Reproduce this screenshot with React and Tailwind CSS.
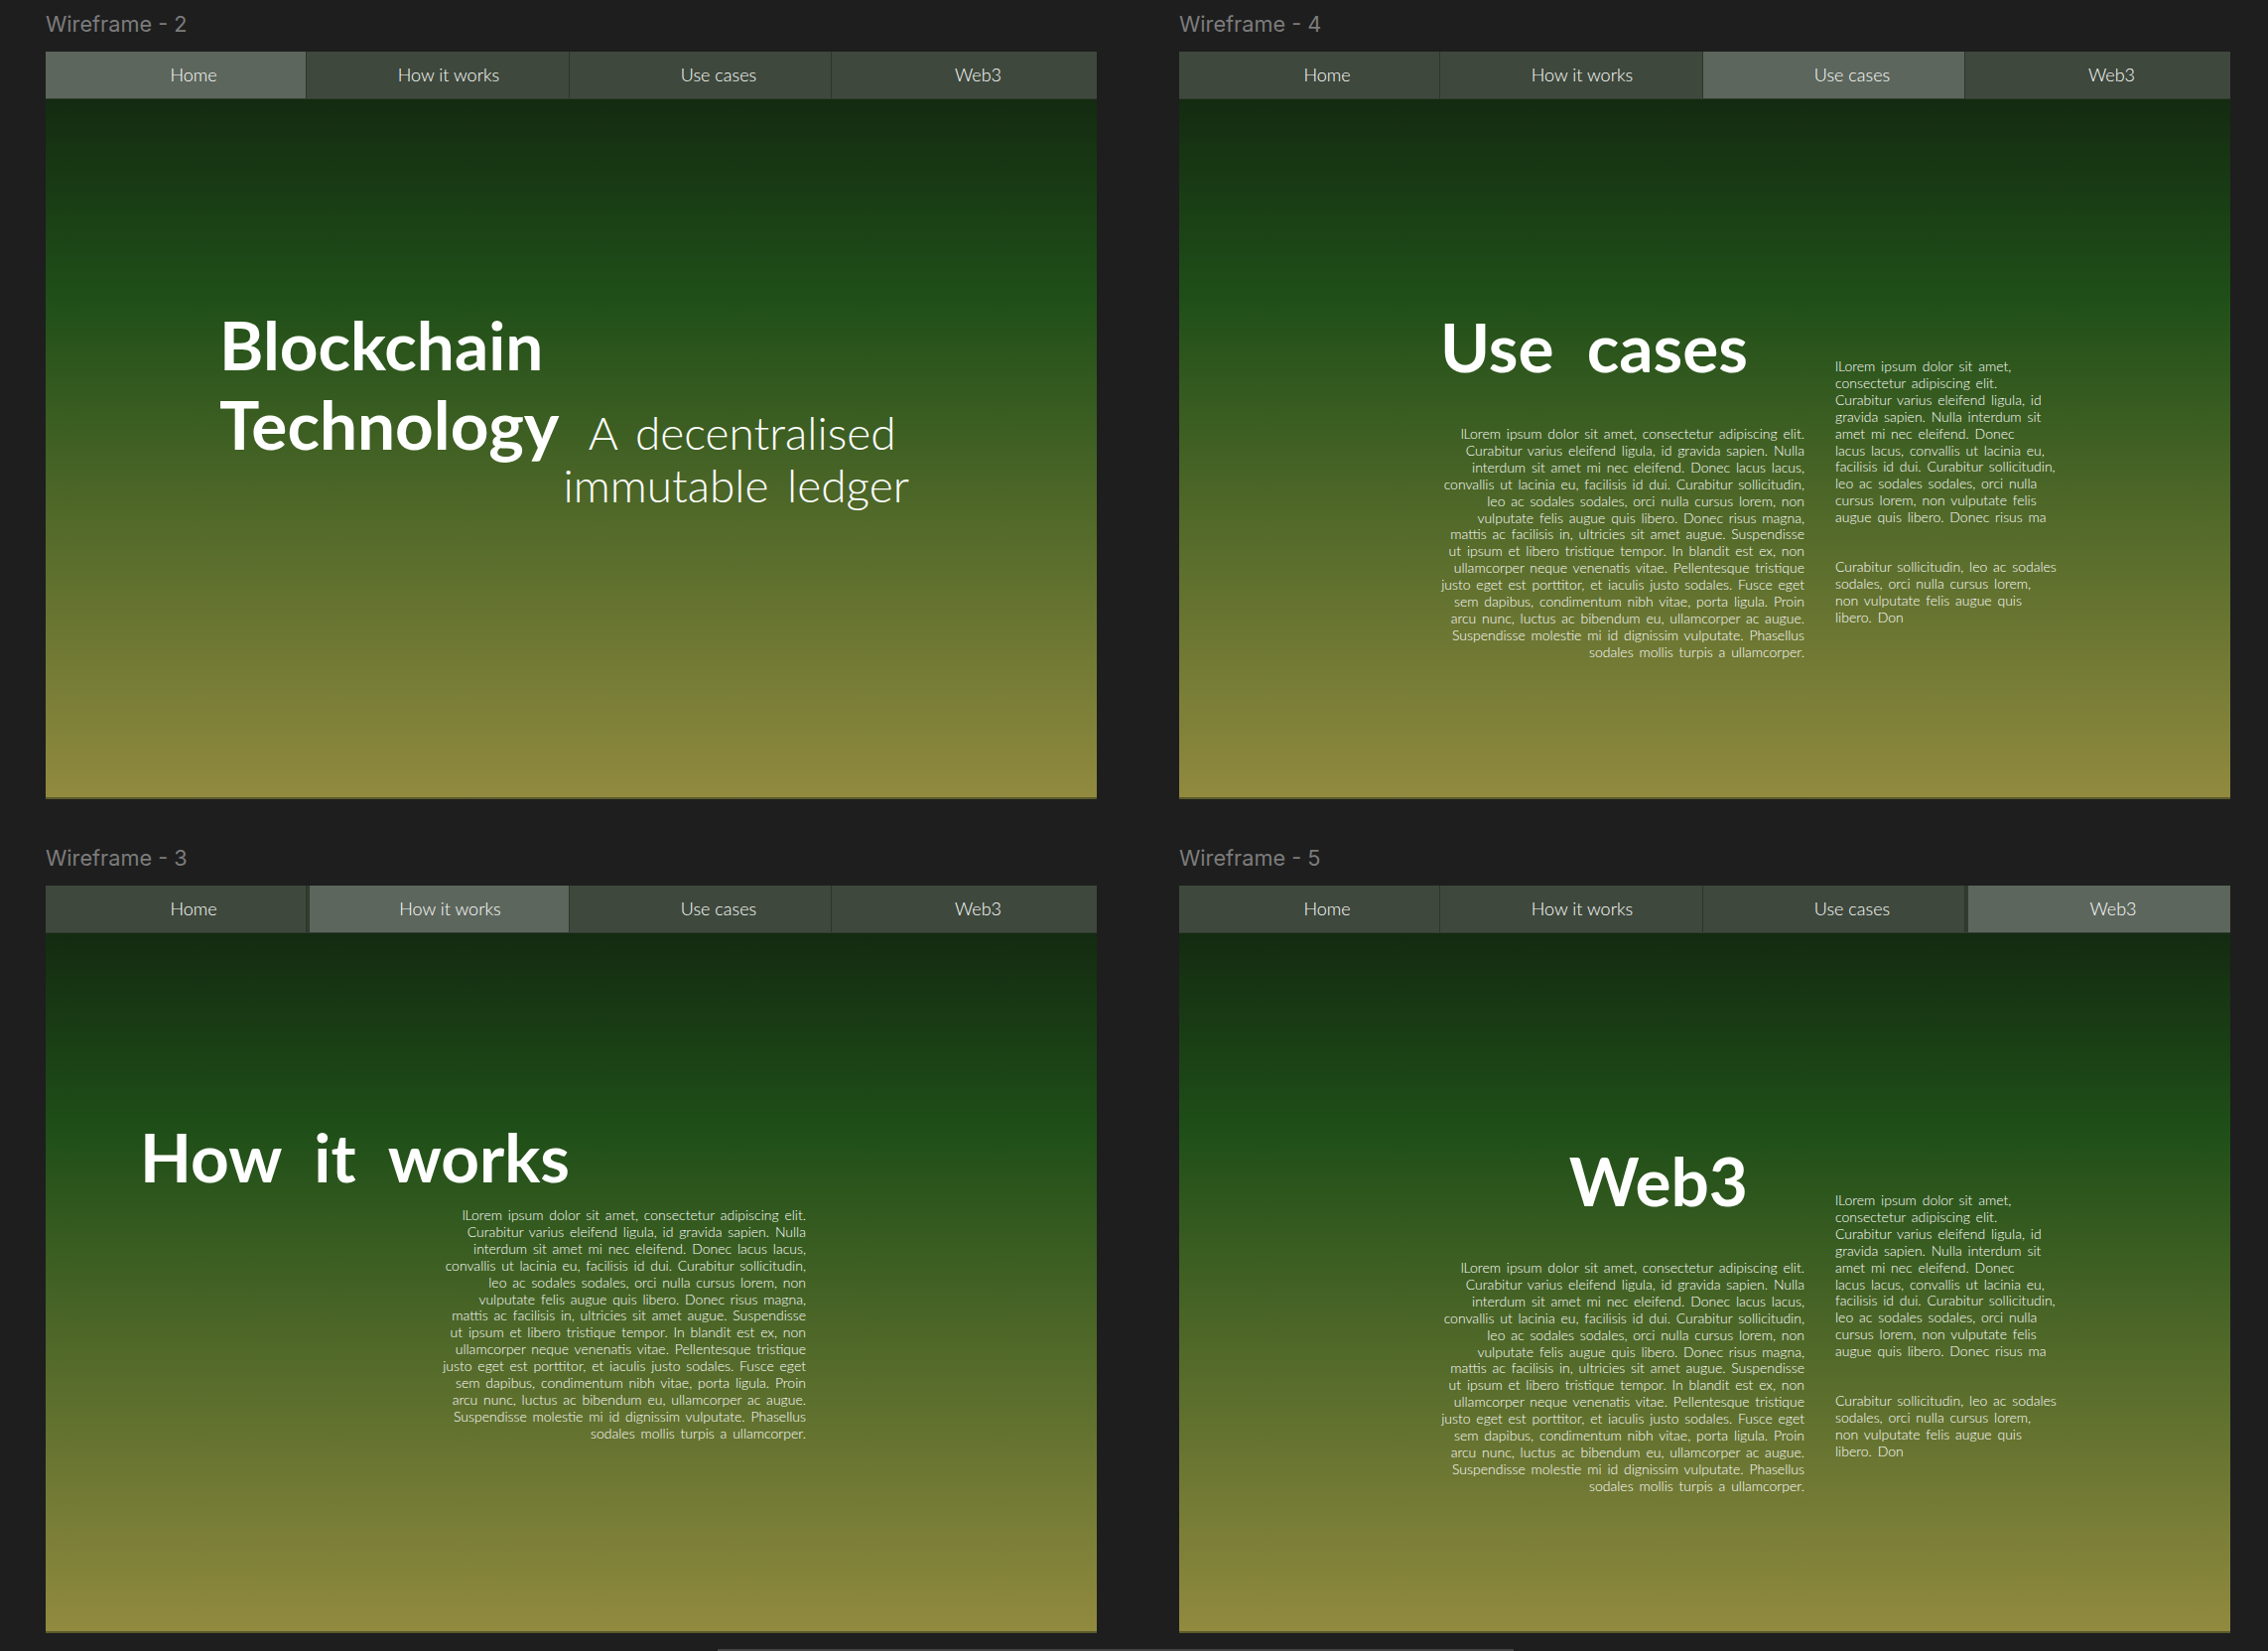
const tabs = [
  { name: "Home", cls: "w-[263px] pl-[36px]" },
  { name: "How it works", cls: "w-[265px] pl-[22px]" },
  { name: "Use cases", cls: "w-[264px] pl-[37px]" },
  { name: "Web3", cls: "flex-1 pl-[28px]" },
]

const mainLines = [
  "lLorem ipsum dolor sit amet, consectetur adipiscing elit.",
  "Curabitur varius eleifend ligula, id gravida sapien. Nulla",
  "interdum sit amet mi nec eleifend. Donec lacus lacus,",
  "convallis ut lacinia eu, facilisis id dui. Curabitur sollicitudin,",
  "leo ac sodales sodales, orci nulla cursus lorem, non",
  "vulputate felis augue quis libero. Donec risus magna,",
  "mattis ac facilisis in, ultricies sit amet augue. Suspendisse",
  "ut ipsum et libero tristique tempor. In blandit est ex, non",
  "ullamcorper neque venenatis vitae. Pellentesque tristique",
  "justo eget est porttitor, et iaculis justo sodales. Fusce eget",
  "sem dapibus, condimentum nibh vitae, porta ligula. Proin",
  "arcu nunc, luctus ac bibendum eu, ullamcorper ac augue.",
  "Suspendisse molestie mi id dignissim vulputate. Phasellus",
  "sodales mollis turpis a ullamcorper.",
]

const sideLines = [
  "lLorem ipsum dolor sit amet,",
  "consectetur adipiscing elit.",
  "Curabitur varius eleifend ligula, id",
  "gravida sapien. Nulla interdum sit",
  "amet mi nec eleifend. Donec",
  "lacus lacus, convallis ut lacinia eu,",
  "facilisis id dui. Curabitur sollicitudin,",
  "leo ac sodales sodales, orci nulla",
  "cursus lorem, non vulputate felis",
  "augue quis libero. Donec risus ma",
]

const sideLines2 = [
  "Curabitur sollicitudin, leo ac sodales",
  "sodales, orci nulla cursus lorem,",
  "non vulputate felis augue quis",
  "libero. Don",
]

function Lines({ lines, className }) {
  return (
    <div className={"text-[14px] leading-[16.9px] font-light text-white [word-spacing:2px] " + className}>
      {lines.map((line, i) => (
        <div key={i} className="whitespace-nowrap">{line}</div>
      ))}
    </div>
  )
}

function Title({ children, className = "" }) {
  return (
    <h1 className={"text-[67.5px] leading-[80px] font-bold text-white whitespace-nowrap [word-spacing:17px] " + className}>
      {children}
    </h1>
  )
}

function Frame({ label, active, children }) {
  return (
    <div className="flex flex-col">
      <div className="h-[52px] pt-[11px] text-[21.7px] leading-[26px] text-[#7c7c7c] font-['Inter',sans-serif]">
        {label}
      </div>
      <div className="h-[753px] flex flex-col font-['Lato',sans-serif] bg-[linear-gradient(180deg,#11220f_0%,#1f4f18_33%,#918a3f_100%)] border-b-2 border-[#5a5a2c]">
        <div className="h-[48px] flex bg-[#3e483c] border-b border-[#333f31]">
          {tabs.map((t, i) => (
            <div
              key={t.name}
              className={
                "flex items-center justify-center text-[18px] font-light text-white border-r border-[#2c362b] last:border-r-0 " +
                t.cls +
                (i === active ? " bg-[#5c665c]" : "") +
                (i === active && i % 2 === 1 ? " border-l-[3px] border-l-[#323c31]" : "")
              }
            >
              {t.name}
            </div>
          ))}
        </div>
        {children}
      </div>
    </div>
  )
}

function TwoColumn({ title }) {
  return (
    <div className="flex">
      <div className="w-[630px] flex flex-col items-end">
        <Title className="mt-[209px] mr-[57px]">{title}</Title>
        <Lines lines={mainLines} className="mt-[40px] text-right" />
      </div>
      <div className="ml-[31px] pt-[261px]">
        <Lines lines={sideLines} />
        <Lines lines={sideLines2} className="mt-[33px]" />
      </div>
    </div>
  )
}

export default function App() {
  return (
    <div className="relative w-[2285px] h-[1663px] overflow-hidden bg-[#1e1e1e]">
      <div className="grid grid-cols-[1059px_1059px] gap-x-[83px] gap-y-[35px] pl-[46px]">
        <Frame label="Wireframe - 2" active={0}>
          <div className="pl-[175px] pt-[207px]">
            <Title>Blockchain</Title>
            <div className="flex">
              <Title>Technology</Title>
              <div className="ml-[4px] pt-[22px] text-[46px] leading-[53px] font-light text-white text-center whitespace-nowrap [word-spacing:6px]">
                <div className="pl-[12px]">A decentralised</div>
                <div>immutable ledger</div>
              </div>
            </div>
          </div>
        </Frame>
        <Frame label="Wireframe - 4" active={2}>
          <TwoColumn title="Use cases" />
        </Frame>
        <Frame label="Wireframe - 3" active={1}>
          <div className="w-[766px] flex flex-col items-end">
            <Title className="mt-[185px] self-start ml-[95px]">How it works</Title>
            <Lines lines={mainLines} className="mt-[11px] text-right" />
          </div>
        </Frame>
        <Frame label="Wireframe - 5" active={3}>
          <TwoColumn title="Web3" />
        </Frame>
      </div>
      <div className="absolute bottom-0 left-[723px] w-[802px] h-[2px] bg-[#444444]" />
    </div>
  )
}
